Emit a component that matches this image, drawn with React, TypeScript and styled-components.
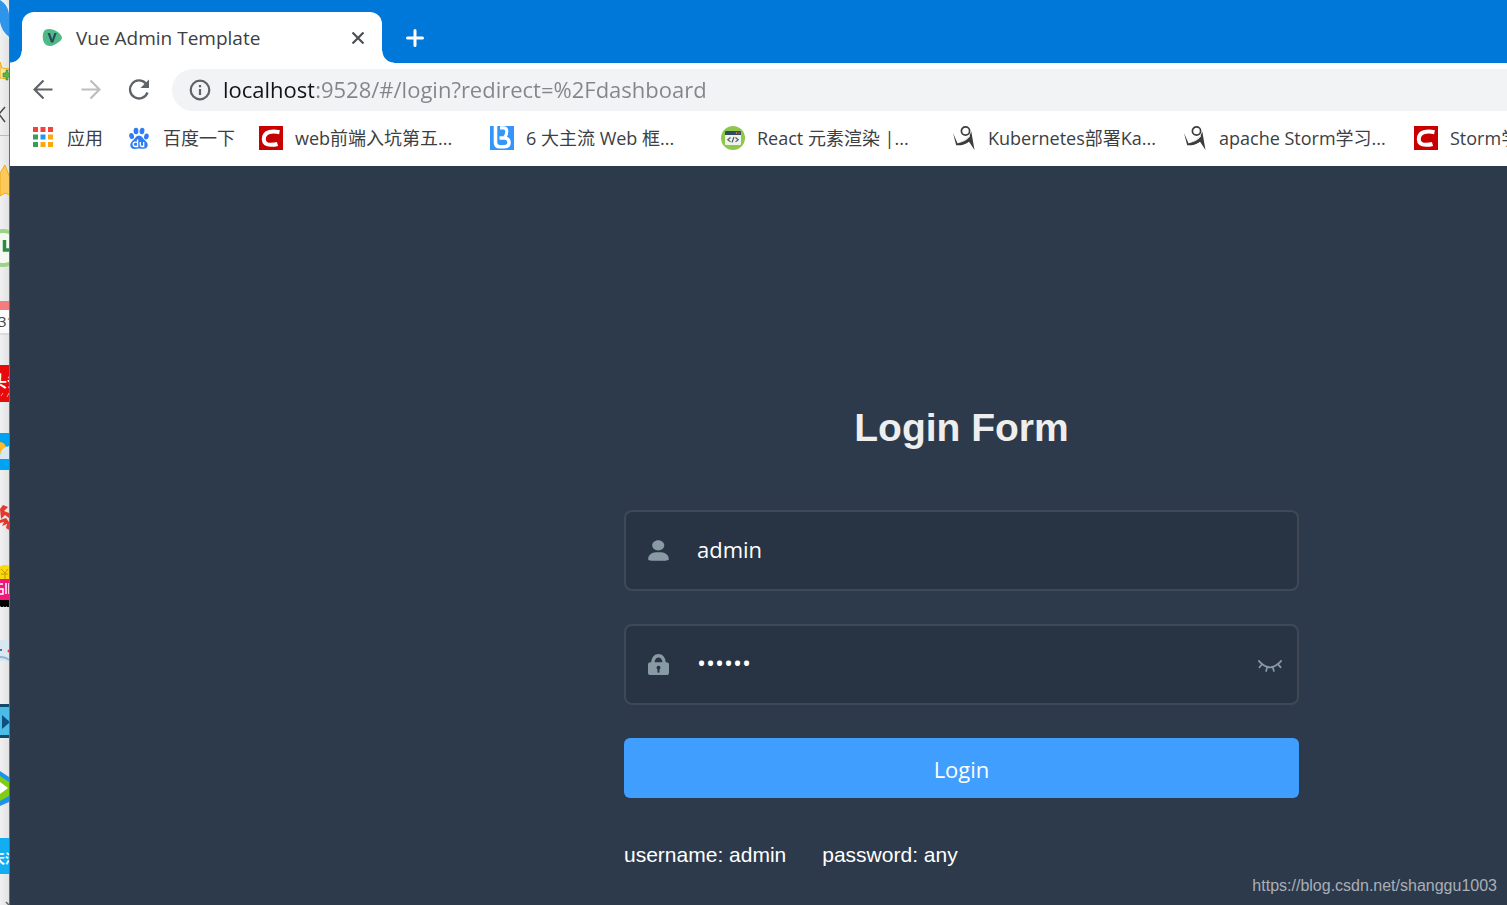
import React from 'react';
import styled, { createGlobalStyle } from 'styled-components';

const uiFont = '"Open Sans", "Noto Sans CJK SC", sans-serif';
const pageFont = '"Liberation Sans", Arial, sans-serif';

const GlobalStyle = createGlobalStyle`
  * { box-sizing: border-box; }
  body { margin: 0; background: #2d3a4b; }
`;

const Screen = styled.div`
  display: grid;
  grid-template-columns: 10px minmax(0, 1fr);
  min-height: 100vh;
  overflow: hidden;
  font-family: ${uiFont};
`;

const Desktop = styled.aside`
  background: linear-gradient(90deg, #f0f0f0, #e2e2e2);
  border-right: 1px solid #1c7fd0;
  overflow: hidden;

  svg { display: block; }
`;

const Browser = styled.div`
  display: flex;
  flex-direction: column;
  min-width: 0;
`;

const TabStrip = styled.header`
  display: flex;
  padding: 12px 12px 0;
  height: 63px;
  background: #0078d9;
`;

const Tab = styled.div`
  position: relative;
  display: flex;
  align-items: center;
  width: 360px;
  padding: 0 13px 0 20px;
  background: #fff;
  border-radius: 12px 12px 0 0;

  &::before, &::after {
    content: '';
    position: absolute;
    bottom: 0;
    width: 12px;
    height: 12px;
  }
  &::before { left: -12px; background: radial-gradient(circle at 0 0, transparent 11px, #fff 12px); }
  &::after { right: -12px; background: radial-gradient(circle at 100% 0, transparent 11px, #fff 12px); }
`;

const TabTitle = styled.span`
  flex: 1;
  margin-left: 14px;
  font-size: 19px;
  line-height: 24px;
  color: #3c4043;
  white-space: nowrap;
`;

const IconButton = styled.button<{ $size: number; $color: string }>`
  display: flex;
  align-items: center;
  justify-content: center;
  flex: none;
  width: ${(p) => p.$size}px;
  height: ${(p) => p.$size}px;
  padding: 0;
  border: 0;
  background: none;
  color: ${(p) => p.$color};
`;

const NewTab = styled.div`
  display: flex;
  align-items: center;
  margin-left: 21px;
`;

const Toolbar = styled.div`
  display: flex;
  align-items: center;
  gap: 12px;
  padding: 6px 0 0 15px;
  background: #fff;
`;

const Omnibox = styled.label`
  display: flex;
  align-items: center;
  gap: 12px;
  flex: 1;
  height: 42px;
  margin-left: 3px;
  padding-left: 17px;
  border-radius: 21px 0 0 21px;
  background: #f1f3f4;
  color: #5f6368;

  svg { flex: none; }
`;

const Address = styled.input`
  flex: 1;
  min-width: 0;
  height: 36px;
  padding: 0 0 2px;
  border: 0;
  outline: 0;
  font-family: ${uiFont};
  font-size: 22px;
  color: transparent;
  background: linear-gradient(90deg, #111317 91px, #80868b 91px);
  -webkit-background-clip: text;
  background-clip: text;
`;

const Bookmarks = styled.nav`
  display: flex;
  align-items: center;
  gap: 24px;
  height: 55px;
  padding: 0 0 1px 21px;
  overflow: hidden;
  background: #fff;
`;

const Bookmark = styled.a<{ $wide?: boolean }>`
  display: flex;
  align-items: center;
  gap: 12px;
  flex: none;
  width: ${(p) => (p.$wide ? '207px' : 'auto')};
  font-size: 18px;
  line-height: 26px;
  color: #3c4043;
  text-decoration: none;
  white-space: nowrap;

  svg { flex: none; }
`;

const Page = styled.main`
  display: grid;
  grid-template-columns: 614fr minmax(0, 675px) 208fr;
  grid-template-rows: 1fr auto;
  flex: 1;
  padding-top: 240px;
  background: #2d3a4b;
  font-family: ${pageFont};
`;

const Form = styled.form`
  grid-column: 2;
  display: flex;
  flex-direction: column;
  gap: 33px;
`;

const Title = styled.h1`
  margin: 0 0 27px;
  font-size: 39px;
  line-height: 44px;
  font-weight: 700;
  text-align: center;
  color: #eee;
`;

const Field = styled.label`
  display: flex;
  align-items: center;
  height: 81px;
  padding: 0 14px 0 22px;
  border: 2px solid rgba(255, 255, 255, 0.1);
  border-radius: 8px;
  background: rgba(0, 0, 0, 0.1);
  color: #889aa4;

  svg { flex: none; }
`;

const FieldInput = styled.input`
  flex: 1;
  min-width: 0;
  height: 70px;
  margin-left: 28px;
  padding: 0 0 4px;
  border: 0;
  outline: 0;
  background: transparent;
  color: #fff;
  font-family: ${uiFont};
  font-size: ${(p) => (p.type === 'password' ? '24px' : '22px')};
`;

const Submit = styled.button`
  height: 60px;
  padding: 2px 0 0;
  border: 0;
  border-radius: 6px;
  background: #409eff;
  color: #fff;
  font-family: ${uiFont};
  font-size: 22px;
`;

const Tips = styled.p`
  display: flex;
  gap: 36px;
  margin: 12px 0 0;
  font-size: 21px;
  line-height: 24px;
  color: #fff;
`;

const Credit = styled.footer`
  grid-column: 1 / -1;
  padding: 0 10px 9px 0;
  font-size: 16px;
  line-height: 20px;
  text-align: right;
  color: #a9afb7;
`;

const VueMark = () => (
  <svg width="20" height="20" viewBox="0 0 20 20" aria-hidden="true">
    <path d="M3 2C6 .3 11 .6 15 3.6c3 2 5 4.400 4.900 6.400-.1 2.600-3.700 4.500-7.400 6.800C9 18.800 4 18.400 2 14.500.2 11 .3 4.200 3 2z" fill="#4dba87" />
    <path d="M5.500 5h2.500l2.200 6.400L12.400 5h2.300l-3.500 9.400H9z" fill="#30475b" />
  </svg>
);

const AppsMark = () => {
  const colors = ['#f44336', '#f44336', '#f44336', '#34a05a', '#2196f3', '#fba70d', '#34a05a', '#fba70d', '#fba70d'];
  return (
    <svg width="24" height="24" viewBox="0 0 24 24" aria-hidden="true">
      {colors.map((c, i) => (
        <rect key={i} x={2 + (i % 3) * 7.500} y={1 + Math.floor(i / 3) * 7.500} width="5" height="5" fill={c} />
      ))}
    </svg>
  );
};

const BaiduMark = () => (
  <svg width="24" height="24" viewBox="0 0 24 24" aria-hidden="true">
    <g fill="#2f7df6">
      <ellipse cx="4.600" cy="10" rx="2.400" ry="3.100" transform="rotate(-12 4.600 10)" />
      <ellipse cx="9" cy="5" rx="2.400" ry="3.300" />
      <ellipse cx="15" cy="5" rx="2.400" ry="3.300" transform="rotate(10 15 5)" />
      <ellipse cx="19.400" cy="10.500" rx="2.300" ry="3" transform="rotate(14 19.400 10.500)" />
      <path d="M12 9.500c2.600 0 3.500 2.300 5.100 4 1.800 1.800 3.700 3 3.600 5.600-.2 2.900-2 3.900-4.400 3.700-1.600-.1-2.700-.4-4.300-.4s-2.700.4-4.300.5c-2.600.1-4.400-1.200-4.400-3.900 0-2.400 1.900-3.700 3.600-5.500 1.600-1.700 2.600-4 5.100-4z" />
    </g>
    <g fill="none" stroke="#fff" strokeWidth="1.300">
      <path d="M10.600 13.500v7H8.300a2.100 2.100 0 0 1 0-4.300h2.300M13.300 16v3.100c0 1 .5 1.400 1.400 1.400h2V16" />
    </g>
  </svg>
);

const CsdnMark = () => (
  <svg width="24" height="24" viewBox="0 0 24 24" aria-hidden="true">
    <rect width="24" height="24" fill="#c90000" />
    <path d="M20.500 6.200C17 5.500 13.500 5.300 10.500 6 6.500 7 4.700 10 4.800 13.500c.2 4 3 5.300 7 5.300 2.500 0 4.800-.2 6.700-.8" fill="none" stroke="#fff" strokeWidth="4" />
  </svg>
);

const BlueMark = () => (
  <svg width="24" height="24" viewBox="0 0 24 24" aria-hidden="true">
    <rect width="24" height="24" fill="#3296fa" />
    <path d="M5.500 0v16.500c0 3 1.500 4.200 4.200 4.200h4.800c3 0 4.500-1.700 4.500-4.200s-1.500-4.500-4.500-4.500H9.500" fill="none" stroke="#fff" strokeWidth="3.600" />
    <path d="M10 1.800h3.800c3.800 0 3.800 6 1 9.200" fill="none" stroke="#fff" strokeWidth="3.200" />
  </svg>
);

const CodeMark = () => (
  <svg width="24" height="24" viewBox="0 0 24 24" aria-hidden="true">
    <circle cx="12" cy="12" r="12" fill="#8cc84b" />
    <rect x="4" y="5" width="16" height="14" rx="1" fill="#f1f2ec" />
    <path d="M4 9V6c0-.6.400-1 1-1h14c.6 0 1 .4 1 1v3z" fill="#324a5e" />
    <circle cx="15.500" cy="7" r=".8" fill="#fba70d" />
    <circle cx="18" cy="7" r=".8" fill="#f1543f" />
    <path d="M9.500 11.500L6.800 13.700l2.700 2.200M14.500 11.500l2.700 2.200-2.700 2.200M13 11l-2 5.500" fill="none" stroke="#4c5d66" strokeWidth="1.200" />
  </svg>
);

const FigureMark = () => (
  <svg width="24" height="24" viewBox="0 0 24 24" aria-hidden="true">
    <circle cx="13.500" cy="5" r="4.100" fill="none" stroke="#3d3d3d" strokeWidth="1.700" />
    <path d="M1 7l3.200 12.300c4.800.3 9-.6 12.700-3.800L22.500 24 19.300 5.500l-1.400 3.300c-1 2-6 6.600-12.300 8.700L1 7z" fill="#3d3d3d" />
    <path d="M5.600 17.200c5-1.500 9.400-4.600 12-8.400l.3 1.800c-3 3.600-7.100 6-12.300 6.600z" fill="#fff" />
    <path d="M5.400 17.800c4.800-.3 8.500-1.800 12-5.600l.6 2.600c-3.200 3-7 4.300-12.600 4z" fill="#3d3d3d" />
  </svg>
);

const BackIcon = () => (
  <svg width="20" height="20" viewBox="0 0 20 20" fill="none" stroke="currentColor" strokeWidth="2.200" aria-hidden="true">
    <path d="M19.500 9.500H1.500M10.500.5L1.500 9.500l9 9" />
  </svg>
);

const ForwardIcon = () => (
  <svg width="20" height="20" viewBox="0 0 20 20" fill="none" stroke="currentColor" strokeWidth="2.200" aria-hidden="true">
    <path d="M.5 9.500h18M9.500.5l9 9-9 9" />
  </svg>
);

const ReloadIcon = () => (
  <svg width="22" height="22" viewBox="0 0 22 22" aria-hidden="true">
    <path d="M19.500 13.500A9 9 0 1 1 17.700 4.400" fill="none" stroke="currentColor" strokeWidth="2.300" />
    <path d="M21 .5V9h-8.500z" fill="currentColor" />
  </svg>
);

const InfoIcon = () => (
  <svg width="22" height="22" viewBox="0 0 22 22" fill="none" stroke="currentColor" aria-hidden="true">
    <circle cx="11" cy="11" r="9.300" strokeWidth="2.200" />
    <path d="M11 10v6M11 6v2.200" strokeWidth="2.200" />
  </svg>
);

const CloseIcon = () => (
  <svg width="12" height="12" viewBox="0 0 12 12" stroke="currentColor" strokeWidth="2.200" aria-hidden="true">
    <path d="M.5.5l11 11M11.500.5l-11 11" />
  </svg>
);

const PlusIcon = () => (
  <svg width="18" height="18" viewBox="0 0 18 18" stroke="currentColor" strokeWidth="3" strokeLinecap="round" aria-hidden="true">
    <path d="M9 1.500v15M1.500 9h15" />
  </svg>
);

const UserIcon = () => (
  <svg width="21" height="21" viewBox="0 0 130 130" fill="currentColor" aria-hidden="true">
    <path d="M63.444 64.996c20.633 0 37.359-14.308 37.359-31.953 0-17.649-16.726-31.952-37.359-31.952-20.631 0-37.360 14.303-37.360 31.952 0 17.645 16.729 31.953 37.360 31.953zM80.570 75.650H49.434c-26.652 0-48.260 18.477-48.260 41.270v2.664c0 9.316 21.608 9.325 48.260 9.325H80.570c26.649 0 48.256-.344 48.256-9.325v-2.663c0-22.794-21.605-41.271-48.256-41.271z" />
  </svg>
);

const LockIcon = () => (
  <svg width="21" height="21" viewBox="0 0 128 128" fill="currentColor" fillRule="evenodd" aria-hidden="true">
    <path d="M108 49.700C106 20 88 .1 64 .1S22 20 20 49.700h-4c-9 0-16 5-16 14V114c0 9 5 14 14 14h100c9 0 14-5 14-14V63.700c0-9-7-14-16-14zM40 49.700C42 32 51 21 64 21s22 11 24 28.700zM64 72a12 12 0 0 1 6 22.400V108c0 8-12 8-12 0V94.400A12 12 0 0 1 64 72z" />
  </svg>
);

const ClosedEyeIcon = () => (
  <svg width="24" height="14" viewBox="0 -10 128 74" fill="currentColor" aria-hidden="true">
    <path d="M127.072 7.994c1.370-2.208.914-5.152-.914-6.870-2.056-1.717-4.797-1.226-6.396.982-.229.245-25.586 32.382-55.740 32.382-29.240 0-55.740-32.382-55.968-32.627-1.600-1.963-4.570-2.208-6.397-.490C-.170 3.086-.399 6.275 1.200 8.238c.457.736 5.940 7.360 14.620 14.720L4.170 35.960c-1.828 1.963-1.600 5.152.228 6.870.457.980 1.600 1.471 2.742 1.471s2.284-.490 3.198-1.472l12.564-13.983c5.940 4.416 13.021 8.587 20.788 11.530l-4.797 17.418c-.685 2.699.686 5.397 3.198 6.133h1.370c2.057 0 3.884-1.472 4.341-3.680L52.600 42.830c3.655.736 7.538 1.227 11.422 1.227 3.883 0 7.767-.490 11.422-1.227l4.797 17.173c.457 2.208 2.513 3.680 4.340 3.680.457 0 .914 0 1.143-.246 2.513-.736 3.883-3.434 3.198-6.133l-4.797-17.172c7.767-2.944 14.848-7.114 20.788-11.530l12.336 13.738c.913.981 2.056 1.472 3.198 1.472s2.284-.490 3.198-1.472c1.828-1.963 1.828-4.906.228-6.870l-11.650-13.001c9.366-7.360 14.849-14.474 14.849-14.474z" />
  </svg>
);

/* The sliver of desktop and its shortcut icons left of the browser window. */
const DesktopSliver = () => (
  <svg width="9" height="905" viewBox="0 0 9 905" aria-hidden="true">
    <path d="M0 0h5l4 7v32C4 35 1 31 0 26z" fill="#e9f0f7" />
    <path d="M0 0c6 4 8 8 9 14v23C4 33 1 28 0 22z" fill="#2f95ea" />
    <path d="M0 62l2 6 7 1-5 5 3 5-7-1z" fill="#fbe79a" stroke="#efac16" />
    <path d="M6 70h2v3h2v4H8v3H6v-3H3v-4h3z" fill="#5eb446" stroke="#2f8e2f" strokeWidth=".6" />
    <path d="M5 107l-6 7 6 8" fill="none" stroke="#444" strokeWidth="1.400" />
    <path d="M0 135.500h9" stroke="#bbb" />
    <path d="M0 173l5-8 5 13v17l-5-2-5 3z" fill="#fbc95c" stroke="#efac16" />
    <circle cx="3" cy="248" r="17" fill="#f4faf2" stroke="#9bd389" strokeWidth="4" />
    <path d="M4.500 240v10H10" fill="none" stroke="#2e8a43" strokeWidth="3.500" />
    <rect y="301" width="9" height="9" fill="#f47c7c" />
    <rect y="310" width="9" height="23" fill="#fafafa" />
    <text x="-2" y="327" fontSize="15" fontFamily="Open Sans" fill="#444">31</text>
    <path d="M0 334h9" stroke="#ccc" />
    <rect y="365" width="9" height="37" fill="#e60a0a" />
    <text x="-9" y="387" fontSize="16" fontWeight="700" fontFamily="Noto Sans CJK SC" fill="#fff">头条</text>
    <path d="M1 396l2-3M7 397l2-4" stroke="#f6a0a0" />
    <rect y="433" width="9" height="37" fill="#00a2f2" />
    <circle cx="0" cy="448" r="6" fill="#fdb92a" />
    <path d="M0 455c2-7 5-8 9-9v13H0z" fill="#d6e8f5" />
    <path d="M0 509l3-4 5 2-4 4 5 2v5l-4-3-4 4M0 520l6-2 3 4v8l-3-2 1-4-5 2 2-4-4 1" fill="#e6392d" />
    <circle cx="5" cy="574" r="9" fill="#f9d90f" />
    <path d="M1 569l4 4 3-4M5 573v7M1 574h7" fill="none" stroke="#c69700" />
    <rect y="579" width="9" height="21" fill="#f0197a" />
    <path d="M0 584h3M0 594h3v-5H0M6 583v11M9 583v11" stroke="#fff" strokeWidth="1.500" fill="none" />
    <rect y="600" width="9" height="7" fill="#000" />
    <path d="M0 607h9" stroke="#eee" strokeDasharray="1 2" />
    <path d="M0 640h9v21H0z" fill="#d9e7f3" />
    <path d="M0 650h2" stroke="#50749b" strokeWidth="2" />
    <circle cx="9" cy="651" r="1.500" fill="#e2412f" />
    <path d="M0 657c4 0 7 1 9 3" fill="none" stroke="#93b3d1" strokeWidth="2" />
    <rect y="704" width="9" height="34" fill="#14486b" />
    <rect y="707" width="9" height="28" fill="#4bbbe8" />
    <path d="M2 715v14l8-7z" fill="#0e4f80" />
    <path d="M0 771l9 6v25l-9 4z" fill="#1b93ee" />
    <path d="M0 776l9 6v14l-9 5z" fill="#80cd12" />
    <path d="M0 782l8 6-8 6z" fill="#fff" />
    <rect y="838" width="9" height="36" fill="#13aef2" />
    <text x="-8" y="863" fontSize="13" fontWeight="700" fontFamily="Noto Sans CJK SC" fill="#fff">天津</text>
    <path d="M6 902l3 3" stroke="#666" strokeWidth="1.500" />
  </svg>
);

const bookmarks = [
  { label: '应用', Mark: AppsMark, wide: false },
  { label: '百度一下', Mark: BaiduMark, wide: false },
  { label: 'web前端入坑第五...', Mark: CsdnMark, wide: true },
  { label: '6 大主流 Web 框...', Mark: BlueMark, wide: true },
  { label: 'React 元素渲染 |...', Mark: CodeMark, wide: true },
  { label: 'Kubernetes部署Ka...', Mark: FigureMark, wide: true },
  { label: 'apache Storm学习...', Mark: FigureMark, wide: true },
  { label: 'Storm学习...', Mark: CsdnMark, wide: true },
];

export default function App() {
  return (
    <>
      <GlobalStyle />
      <Screen>
        <Desktop>
          <DesktopSliver />
        </Desktop>
        <Browser>
          <TabStrip>
            <Tab>
              <VueMark />
              <TabTitle>Vue Admin Template</TabTitle>
              <IconButton $size={22} $color="#4c5054" aria-label="Close tab"><CloseIcon /></IconButton>
            </Tab>
            <NewTab>
              <IconButton $size={24} $color="#fff" aria-label="New tab"><PlusIcon /></IconButton>
            </NewTab>
          </TabStrip>
          <Toolbar>
            <IconButton $size={36} $color="#5f6368" aria-label="Back"><BackIcon /></IconButton>
            <IconButton $size={36} $color="#bcbec0" aria-label="Forward"><ForwardIcon /></IconButton>
            <IconButton $size={36} $color="#5f6368" aria-label="Reload"><ReloadIcon /></IconButton>
            <Omnibox>
              <InfoIcon />
              <Address aria-label="Address" defaultValue="localhost:9528/#/login?redirect=%2Fdashboard" />
            </Omnibox>
          </Toolbar>
          <Bookmarks>
            {bookmarks.map(({ label, Mark, wide }) => (
              <Bookmark key={label} href="#" $wide={wide}>
                <Mark />
                {label}
              </Bookmark>
            ))}
          </Bookmarks>
          <Page>
            <Form onSubmit={(e) => e.preventDefault()}>
              <Title>Login Form</Title>
              <Field>
                <UserIcon />
                <FieldInput aria-label="Username" type="text" defaultValue="admin" />
              </Field>
              <Field>
                <LockIcon />
                <FieldInput aria-label="Password" type="password" defaultValue="111111" />
                <IconButton type="button" $size={26} $color="#889aa4" aria-label="Show password"><ClosedEyeIcon /></IconButton>
              </Field>
              <Submit type="submit">Login</Submit>
              <Tips>
                <span>username: admin</span>
                <span>password: any</span>
              </Tips>
            </Form>
            <Credit>https://blog.csdn.net/shanggu1003</Credit>
          </Page>
        </Browser>
      </Screen>
    </>
  );
}
